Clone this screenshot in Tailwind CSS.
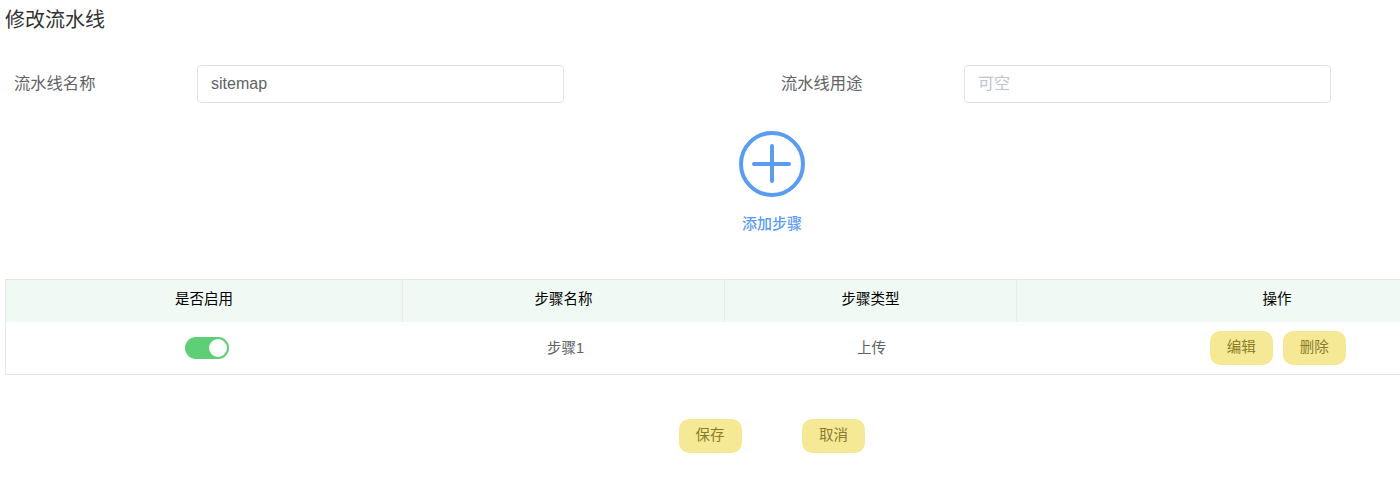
<!DOCTYPE html>
<html lang="zh">
 <head>
  <meta charset="utf-8"/>
  <meta content="width=device-width, initial-scale=1.0" name="viewport"/>
  <title>修改流水线</title>
  <script src="https://cdn.jsdelivr.net/npm/@tailwindcss/browser@4"></script>
 </head>
 <body class="bg-white h-[483px] overflow-hidden font-['Liberation_Sans','Noto_Sans_CJK_SC',sans-serif]">
  <div class="pl-[5px] w-[1400px] overflow-hidden">
   <h1 class="text-[20px] leading-[26px] pt-[7px] text-[#303133]">修改流水线</h1>
   <div class="flex items-center mt-[32px] h-[38px]">
    <label class="w-[192px] pl-[9px] pb-[2px] text-[16.3px] text-[#606266]">流水线名称</label>
    <input class="w-[367px] h-[38px] border border-[#e0e3e8] rounded px-[13px] text-[16px] text-[#606266]" type="text" value="sitemap"/>
    <label class="ml-[217px] w-[183px] pb-[2px] text-[16.3px] text-[#606266]">流水线用途</label>
    <input class="w-[367px] h-[38px] border border-[#e0e3e8] rounded px-[13px] text-[16px] placeholder:text-[#c0c4cc]" placeholder="可空" type="text"/>
   </div>
   <div class="flex flex-col items-center w-[134px] ml-[700px] mt-[28px]">
    <svg class="w-[66px] h-[66px]" viewBox="0 0 66 66" fill="none" stroke="#5a9cf2">
     <circle cx="33" cy="33" r="31" stroke-width="4"/>
     <path d="M33 15V50M15 33H50" stroke-width="4" stroke-linecap="round"/>
    </svg>
    <span class="mt-[16px] text-[15px] leading-[22px] font-medium text-[#5a9cf2]">添加步骤</span>
   </div>
   <table class="table-fixed w-[1533px] mt-[44px] border border-[#e3e5e8] text-[14.5px]">
    <thead>
     <tr class="bg-[#f0f9f4] h-[42px] text-black">
      <th class="w-[397px] font-normal border-r border-[#e8eeea] pb-[1px]">是否启用</th>
      <th class="w-[322px] font-normal border-r border-[#e8eeea] pb-[1px]">步骤名称</th>
      <th class="w-[292px] font-normal border-r border-[#e8eeea] pb-[1px]">步骤类型</th>
      <th class="font-normal pb-[1px]">操作</th>
     </tr>
    </thead>
    <tbody>
     <tr class="h-[53px] text-center text-[#606266]">
      <td>
       <div class="w-[44px] h-[22px] rounded-full bg-[#5fcf77] flex justify-end items-center pr-[2px] mx-auto translate-x-[3px]">
        <div class="w-[18px] h-[18px] rounded-full bg-white"></div>
       </div>
      </td>
      <td class="pl-[4px] pt-[2px]">步骤1</td>
      <td class="pl-[2px] pt-[2px]">上传</td>
      <td>
       <div class="flex justify-center gap-[10px] translate-x-[1px]">
        <button class="w-[63px] h-[34px] rounded-[10px] bg-[#f6e996] text-[#8a7b2a]">编辑</button>
        <button class="w-[63px] h-[34px] rounded-[10px] bg-[#f6e996] text-[#8a7b2a]">删除</button>
       </div>
      </td>
     </tr>
    </tbody>
   </table>
   <div class="flex gap-[60px] ml-[674px] mt-[44px] text-[14.5px]">
    <button class="w-[63px] h-[34px] pr-[1px] rounded-[10px] bg-[#f6e996] text-[#8a7b2a]">保存</button>
    <button class="w-[63px] h-[34px] rounded-[10px] bg-[#f6e996] text-[#8a7b2a]">取消</button>
   </div>
  </div>
 </body>
</html>
